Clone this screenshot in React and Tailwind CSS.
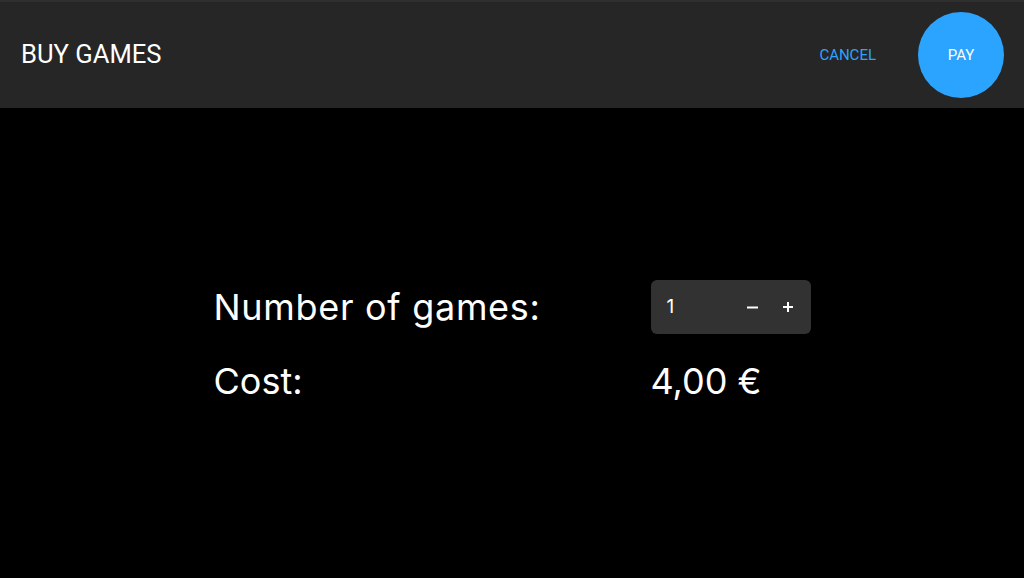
export default function App() {
  return (
    <div className="flex h-[578px] w-[1024px] flex-col bg-black font-['Inter',sans-serif] text-white">
      <header className="flex h-[108px] shrink-0 items-center justify-between border-t-2 border-[#2f2f2f] bg-[#262626] pl-[21px] pr-[20px] font-['Roboto',sans-serif]">
        <h1 className="text-[25.6px] font-normal leading-none">BUY GAMES</h1>
        <div className="flex items-center gap-[42px]">
          <button type="button" className="text-[15px] uppercase text-[#2ba4ff]">
            Cancel
          </button>
          <button
            type="button"
            className="flex h-[86px] w-[86px] items-center justify-center rounded-full bg-[#2ba4ff] text-[15px] text-white"
          >
            PAY
          </button>
        </div>
      </header>

      <main className="flex flex-1 items-center justify-center pb-[7px]">
        <div className="grid w-[597px] grid-cols-[437px_160px] items-center gap-y-[29px]">
          <p className="text-[36px] leading-none tracking-[0.7px]">Number of games:</p>
          <div className="flex h-[54px] items-center rounded-[6px] bg-[#323232] pl-[16px] pr-[18px]">
            <span className="flex-1 text-[19px]">1</span>
            <svg width="11" height="11" viewBox="0 0 11 11" className="mr-[25px]">
              <path d="M0 5.5H11" stroke="white" strokeWidth="2" />
            </svg>
            <svg width="10" height="10" viewBox="0 0 10 10">
              <path d="M0 5H10M5 0V10" stroke="white" strokeWidth="2" />
            </svg>
          </div>
          <p className="text-[36px] leading-none">Cost:</p>
          <p className="text-[36px] leading-none">4,00 €</p>
        </div>
      </main>
    </div>
  )
}
